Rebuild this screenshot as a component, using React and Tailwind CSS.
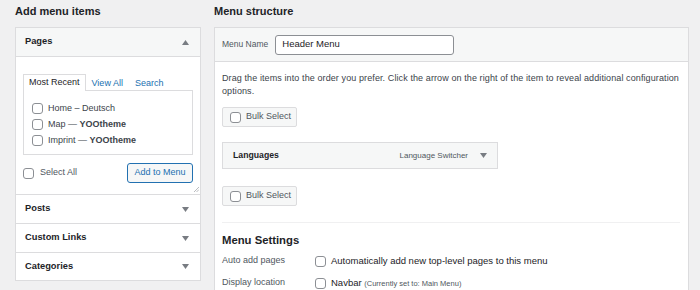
import React from 'react';

const font = { fontFamily: '"Liberation Sans", Arial, sans-serif' };

function Arrow({ up }) {
  return (
    <svg width="7" height="5" viewBox="0 0 7 5" className="text-[#787c82]">
      {up ? <path d="M0 5 L3.5 0 L7 5 Z" fill="currentColor" /> : <path d="M0 0 L3.5 5 L7 0 Z" fill="currentColor" />}
    </svg>
  );
}

function Box() {
  return <span className="inline-block w-[11px] h-[11px] shrink-0 rounded-[3px] border border-[#8c8f94] bg-white" />;
}

function Section({ title, last }) {
  return (
    <div className={`${last ? 'h-[28px]' : 'h-[29px]'} border-t border-[#dcdcde] flex items-center justify-between pl-[9px] pr-[11px]`}>
      <span className="text-[9.3px] font-semibold text-[#1d2327]">{title}</span>
      <Arrow />
    </div>
  );
}

function BulkSelect() {
  return (
    <div className="w-[75px] h-[20px] flex items-center gap-[5px] pl-[7px] bg-[#f6f7f7] border border-[#dcdcde] rounded-[2px]">
      <Box />
      <span className="text-[9px] text-[#50575e]">Bulk Select</span>
    </div>
  );
}

export default function App() {
  return (
    <div style={font} className="w-[700px] h-[290px] overflow-hidden bg-[#f0f0f1] text-[#1d2327] flex gap-[13px] pl-[15px]">

      {/* ── LEFT ── */}
      <div className="w-[186px] shrink-0">
        <h2 className="h-[27px] pt-[3px] text-[11px] font-semibold leading-[16px]">Add menu items</h2>
        <div className="bg-white border border-[#dcdcde]">
          <div className="h-[28px] bg-[#f6f7f7] flex items-center justify-between pl-[9px] pr-[11px]">
            <span className="text-[9.3px] font-semibold">Pages</span>
            <Arrow up />
          </div>
          <div className="relative h-[138px] border-t border-[#dcdcde] px-[7px] pt-[17px]">
            <div className="flex items-end h-[16px] text-[9px]">
              <span className="h-[17px] px-[5px] flex items-center border border-b-0 border-[#dcdcde] bg-white relative top-px">Most Recent</span>
              <span className="px-[6px] text-[#2271b1]">View All</span>
              <span className="px-[6px] text-[#2271b1]">Search</span>
            </div>
            <div className="h-[65px] border border-[#dcdcde] pl-[8px] pt-[12px] flex flex-col gap-[5px] text-[9px] text-[#3c434a]">
              <div className="flex items-center gap-[5px] h-[11px]"><Box /><span>Home – Deutsch</span></div>
              <div className="flex items-center gap-[5px] h-[11px]"><Box /><span>Map — <b className="font-semibold">YOOtheme</b></span></div>
              <div className="flex items-center gap-[5px] h-[11px]"><Box /><span>Imprint — <b className="font-semibold">YOOtheme</b></span></div>
            </div>
            <div className="flex items-center justify-between mt-[8px]">
              <div className="flex items-center gap-[6px] text-[9px] text-[#50575e]"><Box /><span>Select All</span></div>
              <div className="w-[66px] h-[20px] flex items-center justify-center border border-[#2271b1] rounded-[3px] bg-[#f6f7f7] text-[9px] text-[#2271b1]">Add to Menu</div>
            </div>
            <svg width="6" height="6" viewBox="0 0 6 6" className="absolute right-[1px] bottom-[2px]">
              <path d="M1 6 L6 1 M3.5 6 L6 3.5" stroke="#a7aaad" strokeWidth="0.8" />
            </svg>
          </div>
          <Section title="Posts" />
          <Section title="Custom Links" />
          <Section title="Categories" last />
        </div>
      </div>

      {/* ── RIGHT ── */}
      <div className="w-[475px] shrink-0">
        <h2 className="h-[27px] pt-[3px] text-[11px] font-semibold leading-[16px]">Menu structure</h2>
        <div className="bg-white border border-[#dcdcde] h-[300px]">
          <div className="h-[34px] bg-[#f6f7f7] border-b border-[#dcdcde] flex items-center px-[7px] gap-[7px]">
            <span className="text-[8.5px] text-[#50575e]">Menu Name</span>
            <div className="w-[179px] h-[20px] border border-[#8c8f94] rounded-[3px] bg-white flex items-center px-[6px] text-[9.5px]">Header Menu</div>
          </div>
          <div className="px-[7px] pt-[10px]">
            <p className="text-[9px] tracking-[0.1px] leading-[13px] text-[#3c434a]">Drag the items into the order you prefer. Click the arrow on the right of the item to reveal additional configuration options.</p>
            <div className="mt-[9px]"><BulkSelect /></div>
            <div className="mt-[15px] w-[276px] h-[27px] bg-[#f6f7f7] border border-[#dcdcde] flex items-center justify-between pl-[10px] pr-[10px]">
              <span className="text-[8.7px] font-semibold">Languages</span>
              <div className="flex items-center gap-[12px]">
                <span className="text-[8px] text-[#50575e]">Language Switcher</span>
                <Arrow />
              </div>
            </div>
            <div className="mt-[17px]"><BulkSelect /></div>
            <div className="mt-[16px] border-t border-[#f0f0f1] mr-[1px]" />
            <h3 className="mt-[9px] text-[11.3px] font-semibold leading-[16px]">Menu Settings</h3>
            <div className="mt-[6px] flex items-center h-[14px] text-[9.5px]">
              <span className="w-[93px] text-[#50575e] text-[9px]">Auto add pages</span>
              <div className="flex items-center gap-[5px]"><Box /><span>Automatically add new top-level pages to this menu</span></div>
            </div>
            <div className="mt-[8px] flex items-center h-[14px] text-[9.5px]">
              <span className="w-[93px] text-[#50575e] text-[9px]">Display location</span>
              <div className="flex items-center gap-[5px]"><Box /><span>Navbar <span className="text-[7.5px] text-[#50575e]">(Currently set to: Main Menu)</span></span></div>
            </div>
          </div>
        </div>
      </div>
    </div>
  );
}
